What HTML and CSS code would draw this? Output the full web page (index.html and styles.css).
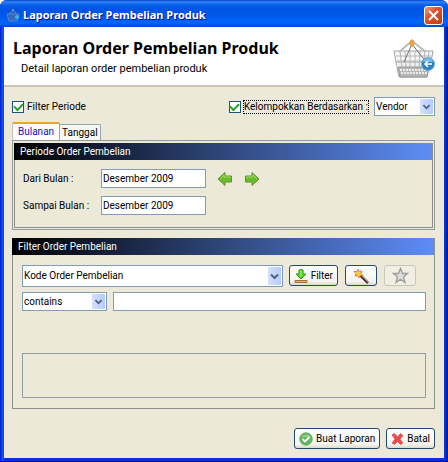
FILE: index.html
```html
<!DOCTYPE html>
<html lang="id">

<head>
    <meta charset="UTF-8">
    <meta name="viewport" content="width=device-width, initial-scale=1.0">
    <title>Laporan Order Pembelian Produk</title>
    <link rel="stylesheet" href="styles.css">
</head>

<body>
    <div class="window">
        <div class="titlebar">
            <svg class="app-icon" width="14" height="14" viewBox="0 0 14 14">
                <path d="M1 6h12l-2 7H3zM3 6l4-4 4 4" fill="#4a7fc4" fill-opacity=".4" stroke="#5f82bd" />
                <path d="M3 9h8M5 6v6M7 6v6M9 6v6" stroke="#4a6ba6" />
                <circle cx="7" cy="2" r="1" fill="#a9946a" />
                <circle cx="11" cy="9" r="2" fill="#38b4f4" />
            </svg>
            <span class="title">Laporan Order Pembelian Produk</span>
            <button type="button" class="close" aria-label="Tutup">
                <svg width="11" height="11" viewBox="0 0 11 11">
                    <path d="M1 1l9 9M10 1l-9 9" stroke="#fff" stroke-width="2" />
                </svg>
            </button>
        </div>

        <header>
            <div>
                <h1>Laporan Order Pembelian Produk</h1>
                <p>Detail laporan order pembelian produk</p>
            </div>
            <svg class="basket" width="44" height="42" viewBox="0 0 44 42">
                <path d="M4 14h36l-4 25H8z" fill="#eeeeee" />
                <path d="M2 13h39l-2 11H4z" fill="#f7f7f7" stroke="#a2a2a2" />
                <path d="M4 24l3 15h28l3-15" fill="none" stroke="#a6a6a6" />
                <path d="M8 13l2 17M13 13l1 17M18 13v17M23 13v17M28 13l-1 17M33 13l-2 17M37 13l-2 17M4 18h35M5 23h33" stroke="#b6b6b6" fill="none" />
                <path d="M6 29h31l-2 10H8z" fill="#b5b5b5" stroke="#999" />
                <path d="M8 32h28M9 35h26" stroke="#ececec" stroke-width="2" stroke-dasharray="2 1" />
                <path d="M7 14L20 3l14 11" fill="none" stroke="#bcbcbc" stroke-width="2" />
                <path d="M12 24L20 6l14 18" fill="none" stroke="#707070" />
                <path d="M18 7V3q2-3 4 0v4l-2 2z" fill="#f0a63c" stroke="#d9913a" stroke-width=".5" />
                <circle cx="36" cy="26" r="6.5" fill="#2d83c0" stroke="#6badd9" />
                <path d="M31 24a5 4 0 0 1 10 0z" fill="#79bbe3" />
                <path d="M40 26h-6M36 23l-3 3 3 3" fill="none" stroke="#fff" stroke-width="1.6" />
            </svg>
        </header>

        <form class="content">
            <div class="options">
                <label class="check">
                    <input type="checkbox" checked>
                    <span>Filter Periode</span>
                </label>
                <label class="check group-by">
                    <input type="checkbox" checked>
                    <span class="focused">Kelompokkan Berdasarkan :</span>
                </label>
                <div class="combo combo-vendor">
                    <select aria-label="Kelompokkan Berdasarkan">
                        <option>Vendor</option>
                    </select>
                    <svg class="arrow" viewBox="0 0 13 17"><path d="M3 7l3.5 3.5L10 7" /></svg>
                </div>
            </div>

            <div class="tabs" role="tablist">
                <button type="button" class="tab active" role="tab" aria-selected="true">Bulanan</button>
                <button type="button" class="tab" role="tab" aria-selected="false">Tanggal</button>
            </div>
            <div class="tab-page">
                <section class="panel">
                    <h2>Periode Order Pembelian</h2>
                    <div class="period">
                        <label for="fromMonth">Dari Bulan :</label>
                        <input type="text" id="fromMonth" value="Desember 2009">
                        <div class="nav">
                            <button type="button" class="icon-button" aria-label="Bulan sebelumnya">
                                <svg width="16" height="16" viewBox="0 0 16 16">
                                    <path d="M1 8l7-6.5V5h6.500v6H8v3.500z" fill="#6abb25" stroke="#628c42" />
                                    <path d="M3 8l4-4v2h6v1.500" fill="none" stroke="#a0db62" />
                                </svg>
                            </button>
                            <button type="button" class="icon-button" aria-label="Bulan berikutnya">
                                <svg width="16" height="16" viewBox="0 0 16 16">
                                    <path d="M15 8L8 1.500V5H1.500v6H8v3.500z" fill="#6abb25" stroke="#628c42" />
                                    <path d="M13 8L9 4v2H3v1.500" fill="none" stroke="#a0db62" />
                                </svg>
                            </button>
                        </div>
                        <label for="toMonth">Sampai Bulan :</label>
                        <input type="text" id="toMonth" value="Desember 2009">
                    </div>
                </section>
            </div>

            <section class="panel filter-panel">
                <h2>Filter Order Pembelian</h2>
                <div class="filter-body">
                    <div class="row">
                        <div class="combo combo-field">
                            <select aria-label="Kolom">
                                <option>Kode Order Pembelian</option>
                            </select>
                            <svg class="arrow" viewBox="0 0 13 17"><path d="M3 7l3.5 3.5L10 7" /></svg>
                        </div>
                        <div class="tools">
                            <button type="button" class="button button-filter">
                                <svg width="14" height="14" viewBox="0 0 14 14">
                                    <path d="M5 1q2-1 4 0v4h3L7 10 2 5h3z" fill="#4ddc1e" stroke="#36931b" />
                                    <path d="M6 2h1v5" fill="none" stroke="#b2f58c" />
                                    <path d="M1 11.500h12v2H1z" fill="#f0b070" stroke="#a96f38" />
                                </svg>
                                Filter
                            </button>
                            <button type="button" class="button button-tool" aria-label="Hapus filter">
                                <svg width="18" height="18" viewBox="0 0 18 18">
                                    <path d="M8 8l8 8" stroke="#4a3430" stroke-width="2.500" />
                                    <path d="M8 7l8 8" stroke="#b48a7c" />
                                    <path d="M6 2l1.200 2.500L10 4 9 6.500 11 8.500 8.200 8.500 7 11 5.500 8.500 3 9 4 6.500 2 4.500 5 4.500z" fill="#ffc94d" stroke="#dd8433" />
                                </svg>
                            </button>
                            <button type="button" class="button button-tool" aria-label="Favorit" disabled>
                                <svg width="17" height="17" viewBox="0 0 17 17">
                                    <path d="M8.500 1.500l2 5h5l-4 3.500 1.500 5.500-4.500-3.200L4 15.500 5.500 10l-4-3.500h5z" fill="#dedede" stroke="#9c9c9c" stroke-width="1.300" />
                                </svg>
                            </button>
                        </div>
                    </div>
                    <div class="row">
                        <div class="combo combo-operator">
                            <select aria-label="Operator">
                                <option>contains</option>
                            </select>
                            <svg class="arrow" viewBox="0 0 13 17"><path d="M3 7l3.5 3.5L10 7" /></svg>
                        </div>
                        <input type="text" class="keyword" aria-label="Kata kunci">
                    </div>
                    <div class="filter-list"></div>
                </div>
            </section>

            <div class="actions">
                <button type="submit" class="button">
                    <svg width="14" height="14" viewBox="0 0 14 14">
                        <circle cx="7" cy="7" r="6.200" fill="#5fb85b" stroke="#67a965" />
                        <path d="M2.500 5a5 4 0 0 1 9 0z" fill="#8fd28b" />
                        <path d="M3.500 7l2.500 2.500L10.500 5" fill="none" stroke="#fff" stroke-width="1.800" />
                    </svg>
                    Buat Laporan
                </button>
                <button type="button" class="button">
                    <svg width="13" height="14" viewBox="0 0 13 14">
                        <path d="M3.500 1.500l3 3.500 3-3.500 2.500 2L9 7l3 4-2.500 1.500-3-3-3 3L1 11l3-4-3-4z" fill="#f0484a" stroke="#d8686a" />
                    </svg>
                    Batal
                </button>
            </div>
        </form>
    </div>
</body>

</html>
```

FILE: styles.css
```css
* {
    box-sizing: border-box;
}

body {
    margin: 0;
    background-color: #fff;
    font-family: Roboto, "Noto Sans", sans-serif;
    font-size: 10px;
    line-height: 14px;
    color: #000;
}

button,
input,
select {
    font: inherit;
    color: inherit;
    margin: 0;
}

.window {
    display: flex;
    flex-direction: column;
    min-height: 100vh;
    padding: 0 4px 3px;
    background-color: #0831d9;
    background-image: linear-gradient(to right, #0019cf, #1660ee 3px, transparent 4px, transparent calc(100% - 4px), #0a3fe0 calc(100% - 4px), #00138c);
    border-bottom: 1px solid #00138c;
    border-radius: 7px 7px 0 0;
    overflow: hidden;
}

/* title bar */
.titlebar {
    display: flex;
    align-items: center;
    gap: 3px;
    height: 27px;
    margin: 0 -4px;
    padding: 3px 5px 0 6px;
    background: linear-gradient(#0a48c8, #2f83f8 2px, #0a5eea 5px, #0054e3 9px, #0058ea 16px, #0066ff 23px, #0048cc);
}

.title {
    flex: 1;
    color: #fff;
    font-family: "Noto Sans", sans-serif;
    font-size: 11px;
    font-weight: bold;
    text-shadow: 1px 1px #0f1089;
}

.close {
    display: flex;
    align-items: center;
    justify-content: center;
    width: 19px;
    height: 19px;
    padding: 0;
    border: 1px solid #fff;
    border-radius: 3px;
    background: linear-gradient(135deg, #eea083, #e0522c 40%, #c63a10);
}

/* heading area */
header {
    display: flex;
    justify-content: space-between;
    min-height: 60px;
    padding: 11px 8px 0 9px;
    background-color: #fff;
    border-bottom: 2px solid #c9c6b9;
}

h1 {
    margin: 0;
    font-family: "Noto Sans", sans-serif;
    font-size: 16px;
    line-height: 20px;
}

header p {
    margin: 4px 0 0 8px;
    font-size: 11px;
}

/* form */
.content {
    flex: 1;
    padding: 10px 9px 9px 8px;
    background-color: #ece9d8;
}

.options {
    display: flex;
    align-items: center;
}

.check {
    display: flex;
    align-items: center;
    gap: 2px;
}

.group-by {
    margin: 0 5px 0 auto;
}

.check input {
    appearance: none;
    width: 12px;
    height: 12px;
    border: 1px solid #1c5180;
    background: #fff;
    display: grid;
    place-items: center;
}

.check input:checked::after {
    content: "";
    width: 7px;
    height: 4px;
    margin-bottom: 2px;
    border: solid #21a121;
    border-width: 0 0 2px 2px;
    transform: rotate(-45deg);
}

.check span {
    line-height: 12px;
    border: 1px solid transparent;
}

.check .focused {
    border: 1px dotted #000;
}

input[type="text"],
select {
    width: 100%;
    height: 19px;
    padding: 0 1px;
    border: 1px solid #7f9db9;
    border-radius: 0;
    background-color: #fff;
}

.combo {
    display: grid;
    align-items: center;
}

.combo select {
    grid-area: 1 / 1;
    appearance: none;
    height: 100%;
    padding-right: 16px;
}

.combo .arrow {
    grid-area: 1 / 1;
    justify-self: end;
    align-self: stretch;
    width: 13px;
    height: calc(100% - 4px);
    margin: 2px;
    border-radius: 1px;
    background: linear-gradient(to right, #d5e1fc, #b6cbf8);
    pointer-events: none;
}

.arrow path {
    fill: none;
    stroke: #4d6185;
    stroke-width: 2;
}

.combo-vendor {
    width: 61px;
    height: 19px;
}

/* tabs */
.tabs {
    display: flex;
    align-items: flex-end;
    margin-top: 6px;
}

.tab {
    height: 16px;
    padding: 0 2px;
    border: 1px solid #91a7b4;
    border-bottom: 0;
    border-left: 0;
    border-radius: 0 2px 0 0;
    background-color: #f8f7f0;
    line-height: 14px;
}

.tab.active {
    height: 18px;
    padding: 0 5px;
    border-left: 1px solid #c5c3bb;
    border-top: 2px solid #e9a52f;
    border-radius: 2px 2px 0 0;
    background-color: #fcfcfe;
    color: #1515b5;
}

.tab-page {
    padding: 2px 1px 1px;
    border: 1px solid #919b9c;
}

.panel {
    border: 1px solid #8c8f8c;
    border-top: 0;
}

.panel h2 {
    margin: 0 0 0 -1px;
    padding: 0 6px;
    font-size: 10px;
    font-weight: normal;
    line-height: 17px;
    color: #fff;
    background: linear-gradient(to right, #000, #5e8df5);
}

.period {
    display: grid;
    grid-template-columns: 70px 105px auto;
    gap: 8px;
    align-items: center;
    padding: 9px 8px 12px;
}

.nav {
    display: flex;
    gap: 11px;
    margin-left: 3px;
}

.icon-button {
    display: flex;
    padding: 0;
    border: 0;
    background: none;
}

/* filter */
.filter-panel {
    margin-top: 8px;
}

.filter-body {
    padding: 10px 8px 10px 9px;
}

.row {
    display: flex;
    gap: 6px;
    margin-bottom: 5px;
}

.tools {
    display: flex;
    gap: 7px;
    padding-right: 10px;
}

.combo-field {
    flex: 1;
    height: 22px;
}

.combo-operator {
    width: 85px;
    height: 19px;
}

.row .keyword {
    flex: 1;
}

.button {
    display: flex;
    align-items: center;
    justify-content: center;
    gap: 3px;
    height: 21px;
    padding: 0 4px;
    border: 1px solid #24496f;
    border-radius: 3px;
    background: linear-gradient(#fff, #f5f4ee 80%, #dcd8cc);
}

.button:disabled {
    border-color: #c9c7ba;
    background: #f1efe4;
}

.button-tool {
    width: 32px;
    padding: 0;
}

.filter-list {
    height: 45px;
    margin-top: 42px;
    border: 1px solid #919ba0;
}

.actions {
    display: flex;
    justify-content: flex-end;
    gap: 6px;
    margin-top: 19px;
}
```
